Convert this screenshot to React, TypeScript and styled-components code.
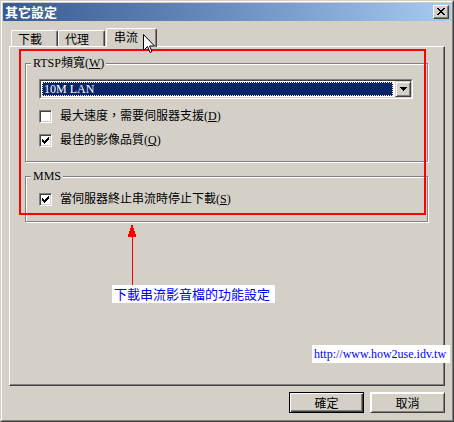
import React from "react";
import styled, { createGlobalStyle } from "styled-components";

const GlobalStyle = createGlobalStyle`
  html, body { margin: 0; padding: 0; background: #d4d0c8; }
  body { font-family: "Liberation Serif", "Noto Sans CJK TC", serif; font-size: 12px; color: #000; }
`;

const CJK = `"Noto Sans CJK TC", "Noto Sans CJK SC", sans-serif`;
const MIX = `"Liberation Serif", "Noto Sans CJK TC", serif`;

const Window = styled.div`
  position: relative;
  width: 454px;
  height: 422px;
  box-sizing: border-box;
  border: 1px solid;
  border-color: #d4d0c8 #404040 #404040 #d4d0c8;
  background: #d4d0c8;
`;

const Frame = styled.div`
  height: 100%;
  box-sizing: border-box;
  border: 1px solid;
  border-color: #fff #808080 #808080 #fff;
  padding: 1px;
  display: flex;
  flex-direction: column;
`;

const TitleBar = styled.div`
  height: 18px;
  flex: 0 0 18px;
  display: flex;
  align-items: center;
  justify-content: space-between;
  padding-left: 2px;
  background: linear-gradient(to right, #385a92 0%, #6a8ebf 50%, #a6caf0 100%);
`;

const TitleText = styled.span`
  font-family: ${CJK};
  font-weight: bold;
  font-size: 13px;
  line-height: 18px;
  color: #fff;
`;

const CloseButton = styled.div`
  width: 16px;
  height: 14px;
  margin-right: 2px;
  box-sizing: border-box;
  border: 1px solid;
  border-color: #fff #404040 #404040 #fff;
  box-shadow: inset -1px -1px #808080;
  background: #d4d0c8;
  display: flex;
  align-items: center;
  justify-content: center;
  svg { display: block; margin-top: -1px; margin-left: -1px; }
`;

const Body = styled.div`
  flex: 1;
  display: flex;
  flex-direction: column;
  padding: 7px 6px 0 6px;
`;

const TabRow = styled.div`
  position: relative;
  z-index: 1;
  height: 19px;
  margin-bottom: -1px;
  display: flex;
  align-items: flex-end;
  padding-left: 2px;
`;

const Tab = styled.div<{ $active?: boolean }>`
  box-sizing: border-box;
  width: ${(p) => (p.$active ? 51 : 47)}px;
  height: ${(p) => (p.$active ? 19 : 16)}px;
  margin-bottom: ${(p) => (p.$active ? 0 : 1)}px;
  margin-left: ${(p) => (p.$active ? 1 : 0)}px;
  padding-left: ${(p) => (p.$active ? 7 : 6)}px;
  padding-bottom: ${(p) => (p.$active ? 2 : 0)}px;
  border-top: 1px solid #fff;
  border-left: 1px solid #fff;
  border-right: 1px solid #404040;
  border-radius: 2px 2px 0 0;
  box-shadow: inset -1px 0 #808080;
  background: #d4d0c8;
  display: flex;
  align-items: center;
  font-family: ${CJK};
  font-size: 12px;
  line-height: 14px;
`;

const Panel = styled.div`
  width: 436px;
  height: 340px;
  box-sizing: border-box;
  border-top: 1px solid #fff;
  border-left: 1px solid #fff;
  border-right: 1px solid #404040;
  border-bottom: 1px solid #404040;
  box-shadow: inset -1px -1px #808080;
  padding: 16px 16px 0 15px;
  display: flex;
  flex-direction: column;
`;

const GroupBox = styled.div<{ $gap?: number; $bottom: number }>`
  display: flex;
  flex-direction: column;
  border: 1px solid #808080;
  box-shadow: inset 1px 1px #fff, 1px 1px #fff;
  padding: 0 14px ${(p) => p.$bottom}px 13px;
  margin-top: ${(p) => p.$gap ?? 0}px;
`;

const Legend = styled.div`
  align-self: flex-start;
  height: 14px;
  line-height: 14px;
  margin: -8px 0 0 -8px;
  padding: 0 2px;
  background: #d4d0c8;
  font-family: ${MIX};
  font-size: 12px;
  white-space: nowrap;
`;

const U = styled.span`
  text-decoration: underline;
  text-underline-offset: 1px;
`;

const Combo = styled.div`
  margin-top: 9px;
  width: 374px;
  height: 20px;
  box-sizing: border-box;
  border: 1px solid;
  border-color: #808080 #fff #fff #808080;
`;

const ComboInner = styled.div`
  height: 100%;
  box-sizing: border-box;
  border: 1px solid;
  border-color: #404040 #d4d0c8 #d4d0c8 #404040;
  background: #fff;
  display: flex;
`;

const ComboField = styled.div`
  flex: 1;
  margin: 1px 2px 1px 1px;
  box-sizing: border-box;
  border: 1px dotted #f0f0c0;
  background: #0a246a;
  color: #fff;
  font-family: "Liberation Serif", serif;
  font-size: 12px;
  line-height: 12px;
  padding-left: 1px;
  display: flex;
  align-items: center;
`;

const ComboButton = styled.div`
  width: 16px;
  height: 16px;
  box-sizing: border-box;
  border: 1px solid;
  border-color: #d4d0c8 #404040 #404040 #d4d0c8;
  box-shadow: inset 1px 1px #fff, inset -1px -1px #808080;
  background: #d4d0c8;
  display: flex;
  align-items: center;
  justify-content: center;
  svg { display: block; }
`;

const Row = styled.div<{ $gap: number }>`
  margin-top: ${(p) => p.$gap}px;
  height: 16px;
  display: flex;
  align-items: center;
  gap: 8px;
  font-family: ${MIX};
  font-size: 12px;
  line-height: 16px;
  white-space: nowrap;
`;

const CheckBox = styled.div`
  width: 13px;
  height: 13px;
  box-sizing: border-box;
  border: 1px solid;
  border-color: #808080 #fff #fff #808080;
  box-shadow: inset 1px 1px #404040, inset -1px -1px #d4d0c8;
  background: #fff;
  position: relative;
  svg { position: absolute; left: 2px; top: 2px; display: block; }
`;

const ButtonRow = styled.div`
  margin-top: 6px;
  display: flex;
  justify-content: flex-end;
  gap: 6px;
`;

const Button = styled.div<{ $default?: boolean }>`
  width: 75px;
  height: 21px;
  box-sizing: border-box;
  background: #d4d0c8;
  border: 1px solid ${(p) => (p.$default ? "#000" : "transparent")};
  box-shadow: ${(p) =>
    p.$default
      ? "inset 1px 1px #fff, inset -1px -1px #404040, inset -2px -2px #808080"
      : "inset 1px 1px #fff, inset -1px -1px #808080"};
  ${(p) => (p.$default ? "" : "border-color: #fff #404040 #404040 #fff;")}
  display: flex;
  align-items: center;
  justify-content: center;
  font-family: ${CJK};
  font-size: 12px;
  line-height: 14px;
`;

/* annotations laid over the dialog */
const RedFrame = styled.div`
  position: absolute;
  z-index: 2;
  left: 18px;
  top: 48px;
  width: 407px;
  height: 166px;
  box-sizing: border-box;
  border: 2px solid #ff0000;
  pointer-events: none;
`;

const ArrowSvg = styled.svg`
  position: absolute;
  z-index: 2;
  left: 125px;
  top: 222px;
  display: block;
`;

const Note = styled.div`
  position: absolute;
  z-index: 2;
  left: 111px;
  top: 284px;
  width: 163px;
  height: 18px;
  box-sizing: border-box;
  padding-left: 2px;
  background: #fff;
  color: #0000ff;
  font-family: ${CJK};
  font-size: 13px;
  line-height: 18px;
  white-space: nowrap;
`;

const UrlNote = styled.div`
  position: absolute;
  z-index: 2;
  left: 311px;
  top: 344px;
  width: 138px;
  height: 18px;
  box-sizing: border-box;
  padding-left: 2px;
  background: #fff;
  color: #0000ff;
  font-family: "Liberation Serif", serif;
  font-size: 12px;
  line-height: 18px;
  white-space: nowrap;
`;

const CursorSvg = styled.svg`
  position: absolute;
  z-index: 3;
  left: 142px;
  top: 33px;
  display: block;
`;

const CheckMark = () => (
  <svg width="7" height="7" viewBox="0 0 7 7" shapeRendering="crispEdges">
    <path
      fill="#000"
      d="M6 0h1v1h-1z M5 1h2v1h-2z M0 2h1v1h-1z M4 2h3v1h-3z M0 3h2v1h-2z M3 3h3v1h-3z M0 4h5v1h-5z M1 5h3v1h-3z M2 6h1v1h-1z"
    />
  </svg>
);

const Check = ({ checked }: { checked?: boolean }) => (
  <CheckBox>{checked && <CheckMark />}</CheckBox>
);

export default function App() {
  return (
    <>
      <GlobalStyle />
      <Window>
        <Frame>
          <TitleBar>
            <TitleText>其它設定</TitleText>
            <CloseButton>
              <svg width="8" height="7" viewBox="0 0 8 7" shapeRendering="crispEdges">
                <path
                  fill="#000"
                  d="M0 0h2v1H0z M6 0h2v1H6z M1 1h2v1H1z M5 1h2v1H5z M2 2h4v1H2z M3 3h2v1H3z M2 4h4v1H2z M1 5h2v1H1z M5 5h2v1H5z M0 6h2v1H0z M6 6h2v1H6z"
                />
              </svg>
            </CloseButton>
          </TitleBar>
          <Body>
            <TabRow>
              <Tab>下載</Tab>
              <Tab>代理</Tab>
              <Tab $active>串流</Tab>
            </TabRow>
            <Panel>
              <GroupBox $bottom={13}>
                <Legend>
                  RTSP頻寬(<U>W</U>)
                </Legend>
                <Combo>
                  <ComboInner>
                    <ComboField>10M LAN</ComboField>
                    <ComboButton>
                      <svg width="7" height="4" viewBox="0 0 7 4" shapeRendering="crispEdges">
                        <path fill="#000" d="M0 0h7v1H0z M1 1h5v1H1z M2 2h3v1H2z M3 3h1v1H3z" />
                      </svg>
                    </ComboButton>
                  </ComboInner>
                </Combo>
                <Row $gap={9}>
                  <Check />
                  <span>
                    最大速度，需要伺服器支援(<U>D</U>)
                  </span>
                </Row>
                <Row $gap={8}>
                  <Check checked />
                  <span>
                    最佳的影像品質(<U>Q</U>)
                  </span>
                </Row>
              </GroupBox>
              <GroupBox $gap={14} $bottom={14}>
                <Legend>MMS</Legend>
                <Row $gap={8}>
                  <Check checked />
                  <span>
                    當伺服器終止串流時停止下載(<U>S</U>)
                  </span>
                </Row>
              </GroupBox>
            </Panel>
            <ButtonRow>
              <Button $default>確定</Button>
              <Button>取消</Button>
            </ButtonRow>
          </Body>
        </Frame>
        <RedFrame />
        <ArrowSvg width="12" height="64" viewBox="0 0 12 64" shapeRendering="crispEdges">
          <polygon points="6,0 10.5,14 1.5,14" fill="#ff0000" />
          <rect x="5.5" y="13" width="1.5" height="50" fill="#ff0000" />
        </ArrowSvg>
        <Note>下載串流影音檔的功能設定</Note>
        <UrlNote>http://www.how2use.idv.tw</UrlNote>
        <CursorSvg width="13" height="21" viewBox="0 0 13 21">
          <path
            d="M0.5 0.5 L0.5 16.5 L4.5 12.5 L7 18.5 L9 17.5 L6.5 12 L11.5 12 Z"
            fill="#fff"
            stroke="#000"
            strokeWidth="1"
            strokeLinejoin="miter"
          />
        </CursorSvg>
      </Window>
    </>
  );
}
